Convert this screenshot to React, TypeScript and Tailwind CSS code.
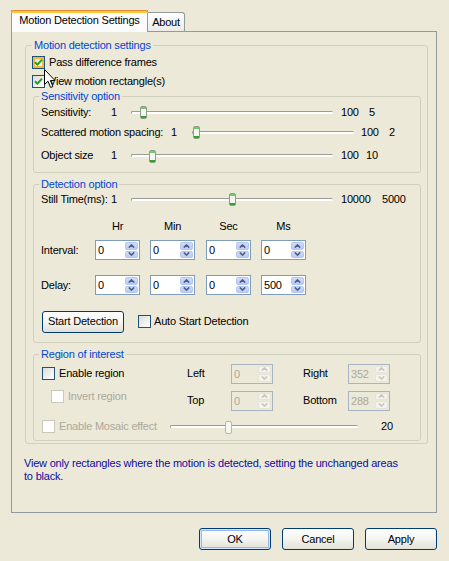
import type { ReactNode } from "react";

// XP-style "Motion Detection Settings" property sheet

function Check({ checked = false, hot = false, disabled = false }: { checked?: boolean; hot?: boolean; disabled?: boolean }) {
  return (
    <span
      className={`relative inline-flex h-[13px] w-[13px] shrink-0 items-center justify-center border ${
        disabled ? "border-[#CAC8BB] bg-white" : "border-[#1C5180] bg-gradient-to-br from-[#DCDCD7] to-white"
      }`}
    >
      {hot && <span className="absolute inset-0 border-2 border-[#F8B636]" />}
      {checked && (
        <svg width="9" height="9" viewBox="0 0 9 9" className="relative">
          <path d="M1 4.2 L3.4 6.6 L8 1.6" fill="none" stroke="#21A121" strokeWidth="2" />
        </svg>
      )}
    </span>
  );
}

function Chevron({ up, color }: { up?: boolean; color: string }) {
  return (
    <svg width="7" height="4" viewBox="0 0 7 4">
      <path d={up ? "M0.8 3.6 L3.5 0.9 L6.2 3.6" : "M0.8 0.4 L3.5 3.1 L6.2 0.4"} fill="none" stroke={color} strokeWidth="1.6" />
    </svg>
  );
}

function Spin({ value, disabled = false, className = "" }: { value: string; disabled?: boolean; className?: string }) {
  return (
    <div
      className={`flex h-[20px] shrink-0 border ${
        disabled ? "border-[#A7B4C2] text-[#ACA899]" : "border-[#7F9DB9] bg-white text-black"
      } ${className}`}
    >
      <span className="flex-1 pl-[2px] leading-[18px]">{value}</span>
      <div className="flex w-[15px] flex-col gap-px p-px">
        {[true, false].map((up) => (
          <span
            key={String(up)}
            className={`flex flex-1 items-center justify-center rounded-[2px] border ${
              disabled ? "border-[#E6E4DA] bg-[#F4F3EE]" : "border-[#B4C6F2] bg-gradient-to-b from-[#D1DCFA] to-[#B9CBF6]"
            }`}
          >
            <Chevron up={up} color={disabled ? "#C9C7BA" : "#4D6185"} />
          </span>
        ))}
      </div>
    </div>
  );
}

function Slider({ className, thumb, disabled = false }: { className: string; thumb: number; disabled?: boolean }) {
  return (
    <div className={`relative flex h-[14px] shrink-0 items-center ${className}`}>
      <div className="h-[3px] w-full rounded-[2px] border-t border-l border-[#9D9C92] bg-white" />
      <svg width="7" height="13" viewBox="0 0 7 13" className="absolute top-[1px]" style={{ left: thumb }}>
        <rect x="0.5" y="0.5" width="6" height="12" rx="1.5" fill="#F6F6F2" stroke={disabled ? "#B8B6AA" : "#8E9C8A"} />
        {!disabled && (
          <>
            <rect x="1" y="1" width="5" height="2" fill="#6FCB6F" />
            <rect x="1" y="10" width="5" height="2" fill="#2FA32F" />
          </>
        )}
      </svg>
    </div>
  );
}

function Group({ title, children, className = "", legendClass = "" }: { title: string; children: ReactNode; className?: string; legendClass?: string }) {
  return (
    <fieldset className={`rounded-[3px] border border-[#D0D0BF] ${className}`}>
      <legend className={`px-[2px] leading-[13px] text-[#0046D5] ${legendClass}`}>{title}</legend>
      {children}
    </fieldset>
  );
}

function XPButton({ children, isDefault = false, className = "" }: { children: ReactNode; isDefault?: boolean; className?: string }) {
  return (
    <button
      type="button"
      className={`flex h-[22px] items-center justify-center rounded-[3px] border border-[#003C74] bg-gradient-to-b from-white via-[#F4F4F0] to-[#E3E1D6] ${
        isDefault ? "shadow-[inset_0_0_0_1px_#CEE7FF,inset_0_0_0_2px_#98B8EA]" : ""
      } ${className}`}
    >
      {children}
    </button>
  );
}

export default function App() {
  return (
    <div className="relative h-[561px] w-[449px] overflow-hidden bg-[#ECE9D8] px-[11px] pt-[10px] font-['Liberation_Sans',Arial,sans-serif] text-[11px] leading-[13px] tracking-[-0.2px] text-black">
      {/* tabs */}
      <div className="relative z-10 flex h-[22px] items-end">
        <div className="flex h-[22px] w-[137px] flex-col border-x border-[#919B9C] bg-[#FCFCFE]">
          <div className="-mx-px h-[3px] rounded-t-[3px] border-t border-[#E68B2C] bg-[#FFC83C]" />
          <span className="pt-[1px] text-center">Motion Detection Settings</span>
        </div>
        <div className="mb-px flex h-[19px] w-[37px] items-center justify-center rounded-tr-[3px] border-t border-r border-[#919B9C] bg-gradient-to-b from-white to-[#ECEBE6]">
          About
        </div>
      </div>

      {/* tab page */}
      <div className="-mt-px h-[482px] w-[426px] border border-[#919B9C] pr-[8px] pl-[13px] pt-[7px]">
        <fieldset className="rounded-[3px] border border-[#D0D0BF] px-[6px] pb-[2px]">
          <legend className="px-[2px] leading-[13px] text-[#0046D5]">Motion detection settings</legend>
          <div className="pt-[1px]">
            <label className="flex h-[19px] items-center gap-[4px]">
              <Check checked hot />
              Pass difference frames
            </label>
            <label className="flex h-[19px] items-center gap-[4px]">
              <Check checked />
              View motion rectangle(s)
            </label>
          </div>

          <Group title="Sensitivity option" className="-mt-px ml-px pb-[4px] pl-[7px]" legendClass="-ml-[2px]">
            <div className="flex h-[18px] items-center">
              <span className="w-[70px]">Sensitivity:</span>
              <span className="w-[20px]">1</span>
              <Slider className="w-[202px]" thumb={9} />
              <span className="ml-[8px] w-[28px]">100</span>
              <span>5</span>
            </div>
            <div className="flex h-[22px] items-center">
              <span className="w-[130px] whitespace-nowrap">Scattered motion spacing:</span>
              <span className="w-[21px]">1</span>
              <Slider className="w-[162px]" thumb={1} />
              <span className="ml-[7px] w-[28px]">100</span>
              <span>2</span>
            </div>
            <div className="flex h-[25px] items-center">
              <span className="w-[70px]">Object size</span>
              <span className="w-[20px]">1</span>
              <Slider className="w-[202px]" thumb={18} />
              <span className="ml-[8px] w-[25px]">100</span>
              <span>10</span>
            </div>
          </Group>

          <Group title="Detection option" className="mt-[5px] ml-px pb-[10px] pl-[7px]" legendClass="-ml-[2px]">
            <div className="flex h-[16px] items-center">
              <span className="w-[70px] whitespace-nowrap">Still Time(ms):</span>
              <span className="w-[20px]">1</span>
              <Slider className="w-[202px]" thumb={98} />
              <span className="ml-[8px] w-[41px]">10000</span>
              <span>5000</span>
            </div>
            <div className="mt-[10px] flex h-[18px] items-center">
              <span className="w-[54px]" />
              <span className="w-[45px] text-center">Hr</span>
              <span className="ml-[10px] w-[45px] text-center">Min</span>
              <span className="ml-[11px] w-[45px] text-center">Sec</span>
              <span className="ml-[10px] w-[45px] text-center">Ms</span>
            </div>
            <div className="mt-[5px] flex h-[20px] items-center">
              <span className="w-[54px]">Interval:</span>
              <Spin value="0" className="w-[45px]" />
              <Spin value="0" className="ml-[10px] w-[45px]" />
              <Spin value="0" className="ml-[11px] w-[45px]" />
              <Spin value="0" className="ml-[10px] w-[45px]" />
            </div>
            <div className="mt-[15px] flex h-[20px] items-center">
              <span className="w-[54px]">Delay:</span>
              <Spin value="0" className="w-[45px]" />
              <Spin value="0" className="ml-[10px] w-[45px]" />
              <Spin value="0" className="ml-[11px] w-[45px]" />
              <Spin value="500" className="ml-[10px] w-[45px]" />
            </div>
            <div className="mt-[16px] flex h-[21px] items-center">
              <XPButton className="ml-px h-[21px] w-[82px]">Start Detection</XPButton>
              <label className="ml-[14px] flex items-center gap-[3px]">
                <Check />
                Auto Start Detection
              </label>
            </div>
          </Group>

          <Group title="Region of interest" className="mt-[5px] ml-px pb-[3px] pl-[8px]" legendClass="-ml-[3px]">
            <div className="mt-[2px] flex h-[21px] items-center">
              <label className="flex w-[145px] items-center gap-[4px]">
                <Check />
                Enable region
              </label>
              <span className="w-[44px]">Left</span>
              <Spin value="0" disabled className="h-[19px] w-[42px]" />
              <span className="ml-[30px] w-[45px]">Right</span>
              <Spin value="352" disabled className="h-[19px] w-[42px]" />
            </div>
            <div className="mt-[6px] flex h-[21px] items-center">
              <label className="flex w-[145px] items-center gap-[4px] self-start pl-[9px] text-[#ACA899]">
                <Check disabled />
                Invert region
              </label>
              <span className="w-[44px]">Top</span>
              <Spin value="0" disabled className="h-[19px] w-[42px]" />
              <span className="ml-[30px] w-[45px]">Bottom</span>
              <Spin value="288" disabled className="h-[19px] w-[42px]" />
            </div>
            <div className="mt-[5px] flex h-[21px] items-center">
              <label className="flex w-[128px] items-center gap-[4px] text-[#ACA899]">
                <Check disabled />
                Enable Mosaic effect
              </label>
              <Slider className="w-[188px]" thumb={55} disabled />
              <span className="ml-[23px]">20</span>
            </div>
          </Group>
        </fieldset>

        <p className="mt-[13px] -ml-px w-[383px] text-[#0C0CA0]">
          View only rectangles where the motion is detected, setting the unchanged areas to black.
        </p>
      </div>

      {/* dialog buttons */}
      <div className="mt-[15px] mr-px flex justify-end gap-[11px]">
        <XPButton isDefault className="w-[72px]">OK</XPButton>
        <XPButton className="w-[72px]">Cancel</XPButton>
        <XPButton className="w-[72px]">Apply</XPButton>
      </div>

      {/* mouse pointer */}
      <svg width="13" height="20" viewBox="0 0 13 20" className="absolute top-[69px] left-[44px]">
        <path d="M0.5 0.5 L0.5 15.5 L4 12.2 L6.6 18.5 L8.9 17.5 L6.4 11.5 L11 11.5 Z" fill="white" stroke="black" strokeLinejoin="round" />
      </svg>
    </div>
  );
}
